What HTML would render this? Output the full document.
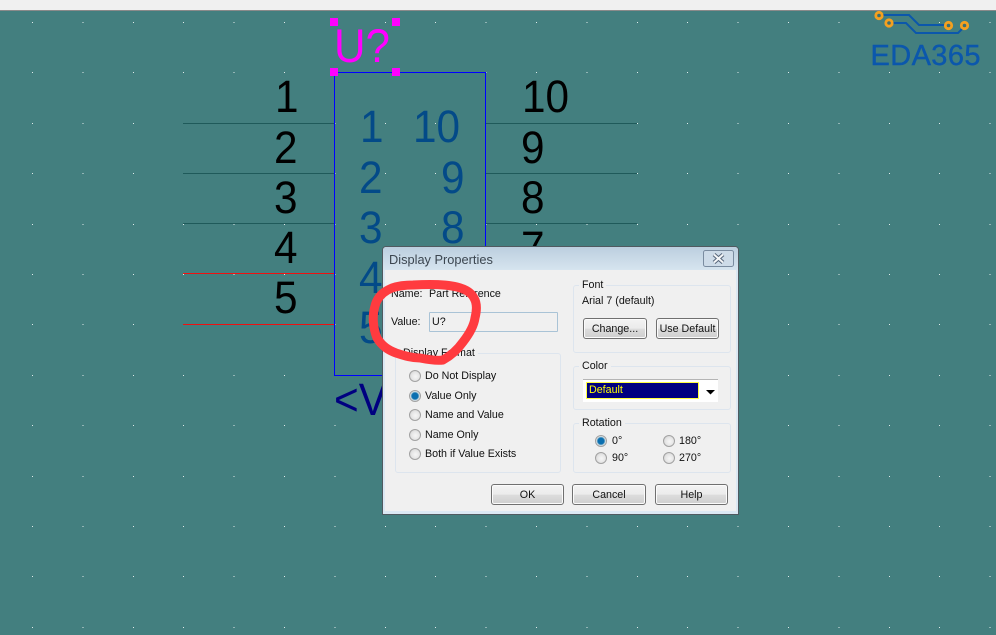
<!DOCTYPE html>
<html><head><meta charset="utf-8"><style>
html,body{margin:0;padding:0}
body{width:996px;height:635px;overflow:hidden;position:relative;background:#437f7f;font-family:"Liberation Sans",sans-serif}
.a{position:absolute;white-space:nowrap}
.n{position:absolute;font-size:45px;line-height:50px;color:#000;white-space:nowrap;transform:scaleX(.94);transform-origin:0 0}
.b{color:#034a88}
.t{position:absolute;font-size:10.7px;line-height:14px;color:#111;white-space:nowrap;margin-top:1px}
.g{position:absolute;border:1px solid #dde5ee;border-radius:3px}
.lg{position:absolute;background:#f0f0f0;padding:0 3px;font-size:10.7px;line-height:14px;color:#111;margin-top:1px}
.r{position:absolute;width:10px;height:10px;border-radius:50%;border:1px solid #a2a2a2;background:radial-gradient(circle at 55% 55%,#f6f6f6 0,#e6e6e6 50%,#c9c9c9 100%)}
.r.on{background:radial-gradient(circle at 50% 50%,#0b6fb0 0 3px,#4a93bd 3.500px,#dfe6ea 4.500px,#cfcfcf 100%)}
.btn{position:absolute;box-sizing:border-box;border:1px solid #707070;border-radius:3px;background:linear-gradient(#f3f3f3 0,#ebebeb 50%,#dcdcdc 52%,#cfcfcf 100%);font-size:10.700px;text-align:center;color:#111;box-shadow:inset 0 0 0 1px #fbfbfb}
</style></head><body>
<div class="a" style="left:0;top:0;width:996px;height:10px;background:#f0f0f0;border-bottom:1px solid #8a8a8a"></div>
<svg class="a" style="left:0;top:0" width="996" height="635" shape-rendering="crispEdges">
<path d="M32 22.500H996M32 72.500H996M32 123.500H996M32 173.500H996M32 224.500H996M32 274.500H996M32 324.500H996M32 375.500H996M32 425.500H996M32 476.500H996M32 526.500H996M32 576.500H996M32 627.500H996" stroke="#dfeaea" stroke-width="1" stroke-dasharray="1 49.400" fill="none"/>
<g fill="#1f5a5a"><rect x="183" y="123" width="151" height="1"/><rect x="183" y="173" width="151" height="1"/><rect x="183" y="223" width="151" height="1"/><rect x="486" y="123" width="151" height="1"/><rect x="486" y="173" width="151" height="1"/><rect x="486" y="223" width="151" height="1"/></g>
<g fill="#f01010"><rect x="183" y="273" width="151" height="1"/><rect x="183" y="324" width="151" height="1"/></g>
<rect x="334.500" y="72.500" width="151" height="303" fill="none" stroke="#0000ff"/>
<g fill="#ff00ff"><rect x="330" y="18" width="8" height="8"/><rect x="392" y="18" width="8" height="8"/><rect x="330" y="68" width="8" height="8"/><rect x="392" y="68" width="8" height="8"/></g>
</svg>
<div class="n" style="left:334px;top:21px;color:#ff00ff;font-size:47px;transform:scaleX(.93)">U?</div>
<div class="n" style="left:275px;top:72px">1</div>
<div class="n" style="left:274px;top:123px">2</div>
<div class="n" style="left:274px;top:173px">3</div>
<div class="n" style="left:274px;top:223px">4</div>
<div class="n" style="left:274px;top:273px">5</div>
<div class="n" style="left:522px;top:72px">10</div>
<div class="n" style="left:521px;top:123px">9</div>
<div class="n" style="left:521px;top:173px">8</div>
<div class="n" style="left:521px;top:223px">7</div>
<div class="n b" style="left:360px;top:102px">1</div>
<div class="n b" style="left:413px;top:102px">10</div>
<div class="n b" style="left:359px;top:153px">2</div>
<div class="n b" style="left:441px;top:153px">9</div>
<div class="n b" style="left:359px;top:203px">3</div>
<div class="n b" style="left:441px;top:203px">8</div>
<div class="n b" style="left:359px;top:253px">4</div>
<div class="n b" style="left:359px;top:303px">5</div>
<div class="n" style="left:334px;top:375px;color:#000080">&lt;V</div>

<!-- logo -->
<svg class="a" style="left:860px;top:0" width="136" height="80">
<g fill="none" stroke="#0b57ac" stroke-width="2"><path d="M23 15H49L59 25H85M33 23H46L56 33H98L102 29"/></g>
<g fill="#3e6f70" stroke="#f5a01f" stroke-width="2.800"><circle cx="19" cy="15.500" r="3.200"/><circle cx="29" cy="23" r="3.200"/><circle cx="88.500" cy="25.500" r="3.200"/><circle cx="104.500" cy="25.500" r="3.200"/></g>
<text x="10.500" y="65" font-family="Liberation Sans" font-size="29" fill="#0b57ac" stroke="#0b57ac" stroke-width=".4" textLength="110" lengthAdjust="spacing">EDA365</text>
</svg>

<!-- dialog -->
<div class="a" style="left:382px;top:246px;width:355px;height:267px;border:1px solid #505a60;border-radius:4px 4px 0 0;background:#dbe8f3;overflow:hidden">
  <div class="a" style="left:0;top:0;width:355px;height:23px;background:linear-gradient(#bccfdf,#d6e4ef)"></div>
  <div class="a" style="left:2px;top:23px;width:351px;height:241px;background:#f0f0f0"></div>
  <div class="t" style="left:6px;top:4px;font-size:12.800px;line-height:15px;color:#3c4650">Display Properties</div>
  <svg class="a" style="left:320px;top:3px" width="31" height="17"><rect x=".5" y=".5" width="30" height="16" rx="2" fill="#cddbe8" stroke="#7a8ca0"/><path d="M11 4.500L20 12.500M20 4.500L11 12.500" stroke="#55657a" stroke-width="4"/><path d="M11 4.500L20 12.500M20 4.500L11 12.500" stroke="#f4f6f8" stroke-width="2"/></svg>
</div>
<div class="t" style="left:391px;top:286px">Name:</div>
<div class="t" style="left:429px;top:286px">Part Reference</div>
<div class="t" style="left:391px;top:314px">Value:</div>
<div class="a" style="left:429px;top:312px;width:127px;height:18px;border:1px solid #a9c3d6;background:#f0f0f0;border-radius:1px"></div>
<div class="t" style="left:432px;top:314px">U?</div>

<div class="g" style="left:395px;top:353px;width:164px;height:118px"></div>
<div class="lg" style="left:400px;top:345px">Display Format</div>
<div class="r" style="left:409px;top:370px"></div><div class="t" style="left:425px;top:368px">Do Not Display</div>
<div class="r on" style="left:409px;top:390px"></div><div class="t" style="left:425px;top:388px">Value Only</div>
<div class="r" style="left:409px;top:409px"></div><div class="t" style="left:425px;top:407px">Name and Value</div>
<div class="r" style="left:409px;top:429px"></div><div class="t" style="left:425px;top:427px">Name Only</div>
<div class="r" style="left:409px;top:448px"></div><div class="t" style="left:425px;top:446px">Both if Value Exists</div>

<div class="g" style="left:573px;top:285px;width:156px;height:66px"></div>
<div class="lg" style="left:579px;top:277px">Font</div>
<div class="t" style="left:582px;top:293px">Arial 7 (default)</div>
<div class="btn" style="left:583px;top:318px;width:64px;height:21px;line-height:21px">Change...</div>
<div class="btn" style="left:656px;top:318px;width:63px;height:21px;line-height:21px">Use Default</div>

<div class="g" style="left:573px;top:366px;width:156px;height:42px"></div>
<div class="lg" style="left:579px;top:358px">Color</div>
<div class="a" style="left:583px;top:379px;width:135px;height:23px;background:#fff;border-top:1px solid #b5b5b5;box-sizing:border-box"></div>
<div class="a" style="left:586px;top:382px;width:111px;height:15px;background:#000080;border:1px solid #ffff40;color:#ffff00;font-size:10.700px;line-height:15px;text-indent:2px">Default</div>
<svg class="a" style="left:705px;top:389px" width="12" height="6"><path d="M1 1H10L5.500 5.500Z" fill="#000"/></svg>

<div class="g" style="left:573px;top:423px;width:156px;height:48px"></div>
<div class="lg" style="left:579px;top:415px">Rotation</div>
<div class="r on" style="left:595px;top:435px"></div><div class="t" style="left:612px;top:433px">0°</div>
<div class="r" style="left:663px;top:435px"></div><div class="t" style="left:679px;top:433px">180°</div>
<div class="r" style="left:595px;top:452px"></div><div class="t" style="left:612px;top:450px">90°</div>
<div class="r" style="left:663px;top:452px"></div><div class="t" style="left:679px;top:450px">270°</div>

<div class="btn" style="left:491px;top:484px;width:73px;height:21px;line-height:21px">OK</div>
<div class="btn" style="left:572px;top:484px;width:74px;height:21px;line-height:21px">Cancel</div>
<div class="btn" style="left:655px;top:484px;width:73px;height:21px;line-height:21px">Help</div>

<svg class="a" style="left:0;top:0" width="996" height="635">
<path d="M392 288C382 292 377 298 375 306C372 316 373 328 377 338C382 346 388 350 396 353C405 356 412 358 420 358C430 360 437 361 443 360C452 355 458 349 463 342C470 333 474 325 475 318C477 310 477 303 474 298C471 292 465 289 457 287C445 284 430 284 413 285C404 285 398 286 392 288Z" fill="none" stroke="#ff3b3f" stroke-width="9" stroke-linejoin="round"/>
</svg>
</body></html>
